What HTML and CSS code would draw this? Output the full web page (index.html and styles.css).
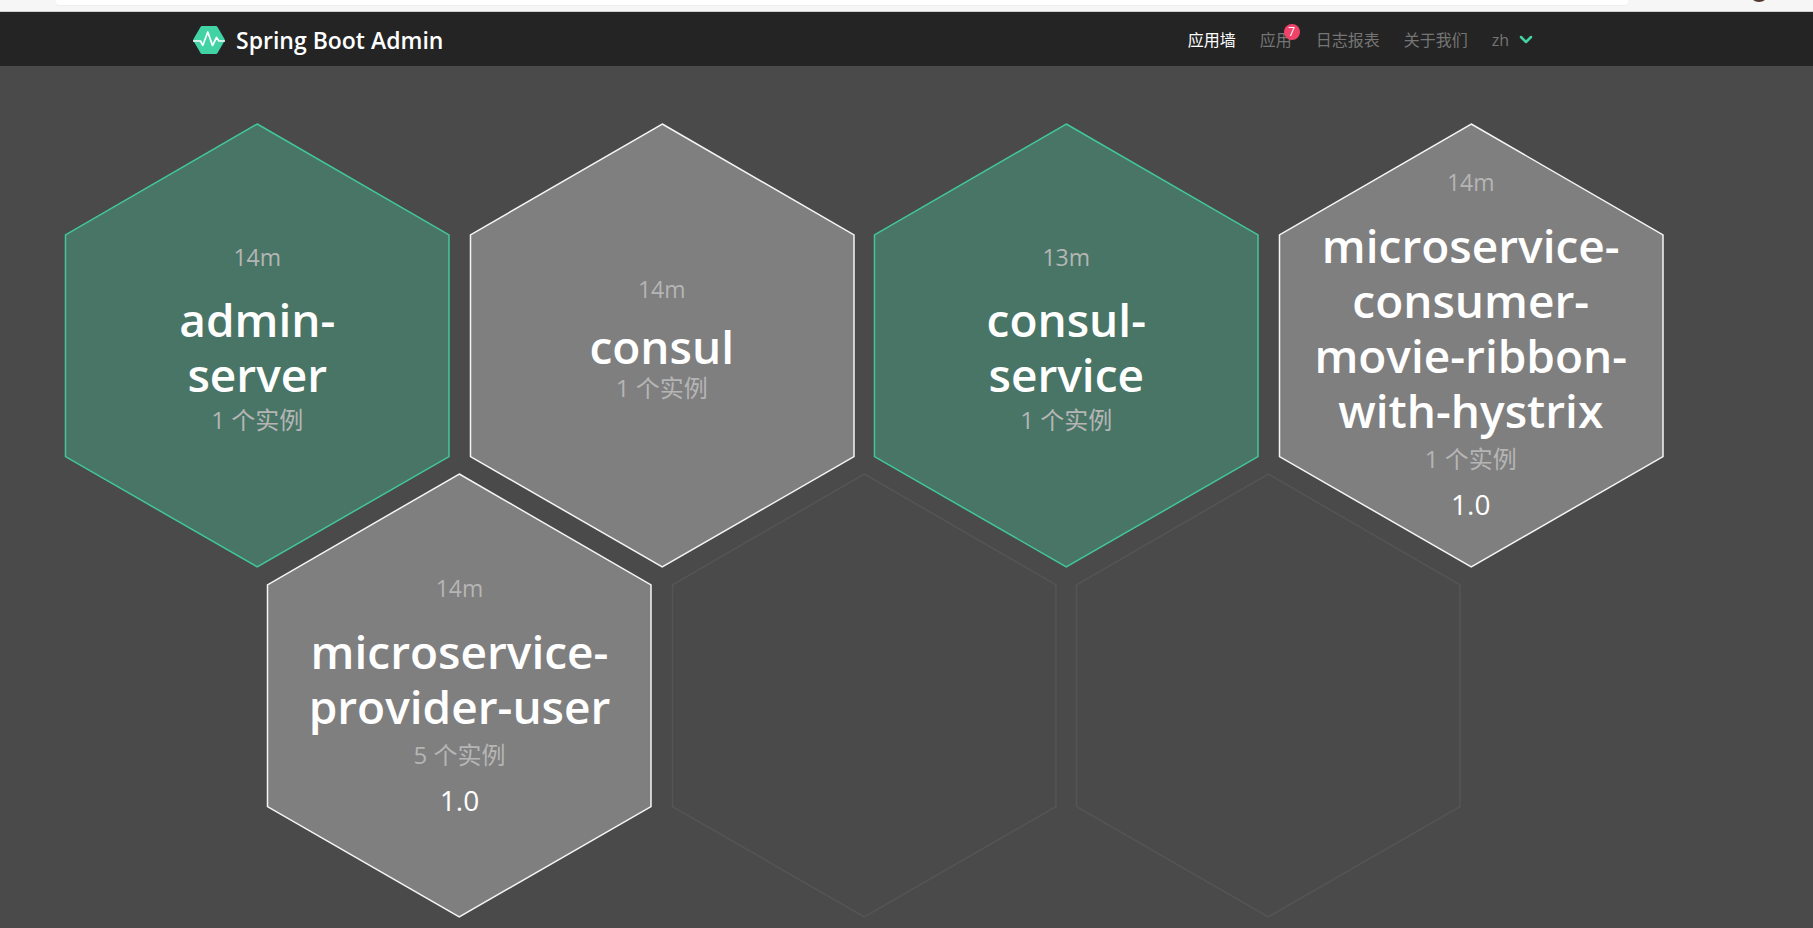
FILE: index.html
```html
<!DOCTYPE html>
<html lang="zh">
<head>
<meta charset="utf-8">
<title>Spring Boot Admin</title>
<link rel="stylesheet" href="styles.css">
</head>
<body>
<div class="chrome">
  <div class="chrome-bar"></div>
  <div class="chrome-avatar"></div>
</div>
<header class="navbar">
  <a class="brand" href="#">
    <svg class="brand-logo" viewBox="0 0 32 28" aria-hidden="true">
      <path d="M9 0h14q1 0 1.500 1l7 12q.5 1 0 2l-7 12q-.5 1-1.500 1H9q-1 0-1.500-1l-7-12q-.5-1 0-2l7-12Q8 0 9 0z" fill="#42d3a5"/>
      <path d="M0 15h7.500l2.300 4.300L14.800 6l4.700 13.500 4-8 2.500 3.500h6" fill="none" stroke="#fff" stroke-width="1.700" stroke-linejoin="round"/>
    </svg>
    <span>Spring Boot Admin</span>
  </a>
  <nav class="menu">
    <a class="menu-item menu-item-active" href="#">应用墙</a>
    <a class="menu-item" href="#">应用<span class="badge">7</span></a>
    <a class="menu-item" href="#">日志报表</a>
    <a class="menu-item" href="#">关于我们</a>
    <button class="menu-item" type="button">zh
      <svg class="chevron" viewBox="0 0 14 10" aria-hidden="true"><path d="M2 2l5 5 5-5" fill="none" stroke="#42d3a5" stroke-width="2.500" stroke-linecap="round" stroke-linejoin="round"/></svg>
    </button>
  </nav>
</header>
<main class="wall">
  <div class="row">
    <a class="hex hex-up" href="#">
      <svg class="hex-shape" viewBox="0 0 385 445" aria-hidden="true"><polygon points="192.500,1 384.500,112 384.500,334 192.500,444.500 .5,334 .5,112"/></svg>
      <span class="hex-body">
        <span class="time">14m</span>
        <strong class="name">admin-<br>server</strong>
        <span class="instances">1 个实例</span>
      </span>
    </a>
    <a class="hex" href="#">
      <svg class="hex-shape" viewBox="0 0 385 445" aria-hidden="true"><polygon points="192.500,1 384.500,112 384.500,334 192.500,444.500 .5,334 .5,112"/></svg>
      <span class="hex-body">
        <span class="time">14m</span>
        <strong class="name name-single">consul</strong>
        <span class="instances">1 个实例</span>
      </span>
    </a>
    <a class="hex hex-up" href="#">
      <svg class="hex-shape" viewBox="0 0 385 445" aria-hidden="true"><polygon points="192.500,1 384.500,112 384.500,334 192.500,444.500 .5,334 .5,112"/></svg>
      <span class="hex-body">
        <span class="time">13m</span>
        <strong class="name">consul-<br>service</strong>
        <span class="instances">1 个实例</span>
      </span>
    </a>
    <a class="hex" href="#">
      <svg class="hex-shape" viewBox="0 0 385 445" aria-hidden="true"><polygon points="192.500,1 384.500,112 384.500,334 192.500,444.500 .5,334 .5,112"/></svg>
      <span class="hex-body hex-body-versioned">
        <span class="time">14m</span>
        <strong class="name">microservice-<br>consumer-<br>movie-ribbon-<br>with-hystrix</strong>
        <span class="instances">1 个实例</span>
        <span class="version">1.0</span>
      </span>
    </a>
  </div>
  <div class="row row-shifted">
    <a class="hex" href="#">
      <svg class="hex-shape" viewBox="0 0 385 445" aria-hidden="true"><polygon points="192.500,1 384.500,112 384.500,334 192.500,444.500 .5,334 .5,112"/></svg>
      <span class="hex-body hex-body-versioned">
        <span class="time">14m</span>
        <strong class="name">microservice-<br>provider-user</strong>
        <span class="instances">5 个实例</span>
        <span class="version">1.0</span>
      </span>
    </a>
    <div class="hex hex-empty">
      <svg class="hex-shape" viewBox="0 0 385 445" aria-hidden="true"><polygon points="192.500,1 384.500,112 384.500,334 192.500,444.500 .5,334 .5,112"/></svg>
    </div>
    <div class="hex hex-empty">
      <svg class="hex-shape" viewBox="0 0 385 445" aria-hidden="true"><polygon points="192.500,1 384.500,112 384.500,334 192.500,444.500 .5,334 .5,112"/></svg>
    </div>
  </div>
</main>
</body>
</html>
```
FILE: styles.css
```css
* { box-sizing: border-box; }

body {
  margin: 0;
  min-height: 100vh;
  background: #4a4a4a;
  color: #fff;
  font-family: "Open Sans", "Noto Sans CJK SC", sans-serif;
}

a { color: inherit; text-decoration: none; }

.chrome {
  display: flex;
  align-items: flex-start;
  height: 12px;
  padding: 0 44px 0 56px;
  background: #f6f6f6;
  border-bottom: 1px solid #cfcfcf;
  overflow: hidden;
}

.chrome-bar {
  flex: 1;
  height: 5px;
  margin-right: 121px;
  background: #fff;
  border-radius: 0 0 4px 4px;
  box-shadow: 0 1px 1px #eee;
}

.chrome-avatar {
  width: 20px;
  height: 20px;
  margin-top: -18px;
  background: #50392e;
  border-radius: 50%;
}

.navbar {
  display: flex;
  align-items: center;
  justify-content: space-between;
  height: 54px;
  padding: 1px 268px 0 193px;
  background: #242424;
}

.brand {
  display: flex;
  align-items: center;
  gap: 11px;
  font-size: 23px;
  line-height: 32px;
  font-weight: 600;
}

.brand-logo { width: 32px; height: 28px; }

.menu { display: flex; align-items: center; }

.menu-item {
  position: relative;
  display: flex;
  align-items: center;
  gap: 10px;
  padding: 0 12px;
  border: 0;
  background: none;
  color: #757575;
  font-family: inherit;
  font-size: 16px;
  font-weight: 400;
  line-height: 24px;
}

.menu-item-active { color: #fff; }

.badge {
  position: absolute;
  top: -4px;
  right: 4px;
  width: 16px;
  height: 16px;
  border-radius: 50%;
  background: #f0436a;
  color: #fff;
  font-size: 12px;
  line-height: 16px;
  text-align: center;
}

.chevron { width: 14px; height: 10px; }

.wall { padding: 57px 150px 8px 65px; }

.row {
  display: grid;
  grid-template-columns: repeat(8, minmax(0, 1fr));
  column-gap: 20px;
}

.row-shifted { margin-top: -94px; }
.row-shifted .hex:first-child { grid-column: 2 / span 2; }

.hex {
  display: grid;
  grid-column: span 2;
  pointer-events: none;
}

.hex-shape,
.hex-body { grid-area: 1 / 1; }

.hex-shape {
  width: 100%;
  fill: #7f7f7f;
  stroke: #f5f5f5;
  stroke-width: 1.5;
  overflow: visible;
  pointer-events: auto;
}

.hex-up .hex-shape { fill: #487565; stroke: #42c79b; }
.hex-empty .hex-shape { fill: none; stroke: #555; }

.hex-body {
  display: flex;
  flex-direction: column;
  align-items: center;
  justify-content: center;
  padding-bottom: 13px;
  text-align: center;
}

.time,
.instances { color: #b5b5b5; line-height: 36px; }
.time { font-size: 23px; }
.instances { font-size: 24px; }

.name {
  margin: 17px 0 0;
  font-size: 46px;
  font-weight: 600;
  line-height: 55px;
}

.name-single { margin: 12px 0 -4px; }

.hex-body-versioned { padding-bottom: 2px; }
.hex-body-versioned .name { margin: 18px 0 3px; }

.version {
  margin-top: 7px;
  font-size: 28px;
  line-height: 40px;
}
```
